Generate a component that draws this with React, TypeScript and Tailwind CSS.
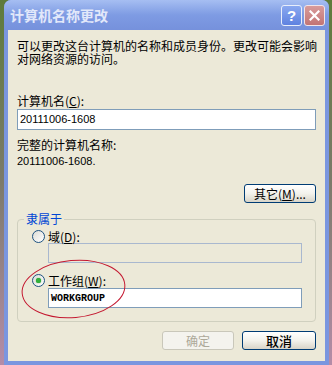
import React from 'react';

const cjk = { fontFamily: '"Noto Sans CJK SC", "Liberation Sans", sans-serif' };

const XpButton: React.FC<{ children: React.ReactNode; width: string; disabled?: boolean }> = ({ children, width, disabled }) => (
  <div
    className={`${width} h-[19px] rounded-[3px] border flex items-center justify-center text-[12px] leading-[13px] ${
      disabled
        ? 'border-[#C9C7BA] bg-[#F4F3EE] text-[#ACA899]'
        : 'border-[#003C74] bg-gradient-to-b from-white via-[#F3F2EC] to-[#D8D4C8] text-black'
    }`}
  >
    {children}
  </div>
);

const Radio: React.FC<{ checked?: boolean }> = ({ checked }) => (
  <div className="w-[13px] h-[13px] rounded-full border border-[#1C5180] bg-gradient-to-br from-[#DCDCD6] to-white flex items-center justify-center">
    {checked && <div className="w-[5px] h-[5px] rounded-full bg-[#31B03A] shadow-[0_0_1px_#1E8A26]" />}
  </div>
);

const App: React.FC = () => {
  return (
    <div className="w-[332px] h-[365px] relative overflow-hidden bg-gradient-to-b from-[#5E7B3A] via-[#7C7A6A] to-[#B48CA8]" style={cjk}>
      {/* dialog frame */}
      <div className="ml-[4px] w-[325px] h-[365px] rounded-t-[7px] bg-[#7A96DF] flex flex-col px-[4px] pb-[4px]">
        {/* title bar */}
        <div className="h-[30px] -mx-[4px] rounded-t-[7px] bg-gradient-to-b from-[#A6BEF2] via-[#7E9BE3] to-[#7691DC] flex items-center pl-[6px] pr-[4px]">
          <span className="text-[14px] font-bold leading-[16px] text-[#E2E8FA] flex-1">计算机名称更改</span>
          <div className="w-[21px] h-[21px] rounded-[3px] border border-[#E8EEFB] bg-gradient-to-b from-[#8AA8F0] to-[#5F82E0] flex items-center justify-center text-white font-bold text-[15px] leading-none" style={{ fontFamily: '"Liberation Sans", sans-serif' }}>
            ?
          </div>
          <div className="ml-[2px] w-[21px] h-[21px] rounded-[3px] border border-[#F1E4E8] bg-gradient-to-b from-[#D89B9B] to-[#C27474] flex items-center justify-center">
            <svg width="11" height="11" viewBox="0 0 11 11">
              <path d="M1.5 1.5 L9.5 9.5 M9.5 1.5 L1.5 9.5" stroke="white" strokeWidth="2.2" strokeLinecap="square" />
            </svg>
          </div>
        </div>

        {/* client area */}
        <div className="flex-1 bg-[#ECE9D8] px-[9px] pt-[9px] text-black text-[12px]">
          <div className="h-[13px] leading-[13px] whitespace-nowrap">可以更改这台计算机的名称和成员身份。更改可能会影响</div>
          <div className="h-[13px] leading-[13px] whitespace-nowrap">对网络资源的访问。</div>

          <div className="mt-[29px] h-[13px] leading-[13px]">
            计算机名(<u>C</u>):
          </div>
          <div className="mt-[2px] h-[21px] border border-[#7F9DB9] bg-white flex items-center pl-[2px] text-[11px]" style={{ fontFamily: '"Liberation Sans", sans-serif' }}>
            20111006-1608
          </div>

          <div className="mt-[8px] h-[13px] leading-[13px]">完整的计算机名称:</div>
          <div className="mt-[4px] h-[13px] leading-[13px] text-[11px]" style={{ fontFamily: '"Liberation Sans", sans-serif' }}>
            20111006-1608.
          </div>

          <div className="mt-[16px] flex justify-end">
            <XpButton width="w-[72px]">
              其它(<u>M</u>)...
            </XpButton>
          </div>

          {/* group box */}
          <div className="mt-[16px] h-[103px] relative border border-[#D0D0BF] rounded-[4px] pl-[14px] pt-[10px]">
            <div className="absolute -top-[8px] left-[6px] px-[2px] bg-[#ECE9D8] text-[#0046D5] leading-[14px]">隶属于</div>

            <div className="h-[13px] flex items-center gap-[3px]">
              <Radio />
              <span className="leading-[13px]">
                域(<u>D</u>):
              </span>
            </div>
            <div className="ml-[16px] w-[254px] h-[20px] border border-[#A9B8CF] bg-[#ECE9D8]" />

            <div className="mt-[11px] h-[13px] flex items-center gap-[3px]">
              <Radio checked />
              <span className="leading-[13px]">
                工作组(<u>W</u>):
              </span>
            </div>
            <div className="mt-[1px] ml-[16px] w-[254px] h-[20px] border border-[#7F9DB9] bg-white flex items-center pl-[2px] text-[10px] font-bold" style={{ fontFamily: '"Liberation Mono", monospace' }}>
              WORKGROUP
            </div>
          </div>

          <div className="mt-[9px] flex justify-end gap-[8px]">
            <XpButton width="w-[72px]" disabled>
              确定
            </XpButton>
            <XpButton width="w-[74px]">
              <span className="font-medium text-[13px]">取消</span>
            </XpButton>
          </div>
        </div>
      </div>

      {/* hand-drawn red ellipse */}
      <svg className="absolute left-0 top-0 pointer-events-none" width="332" height="365">
        <ellipse cx="73.5" cy="289" rx="51.5" ry="28.5" fill="none" stroke="#C41830" strokeWidth="1" transform="rotate(-5 73.5 289)" />
      </svg>
    </div>
  );
};

export default App;
